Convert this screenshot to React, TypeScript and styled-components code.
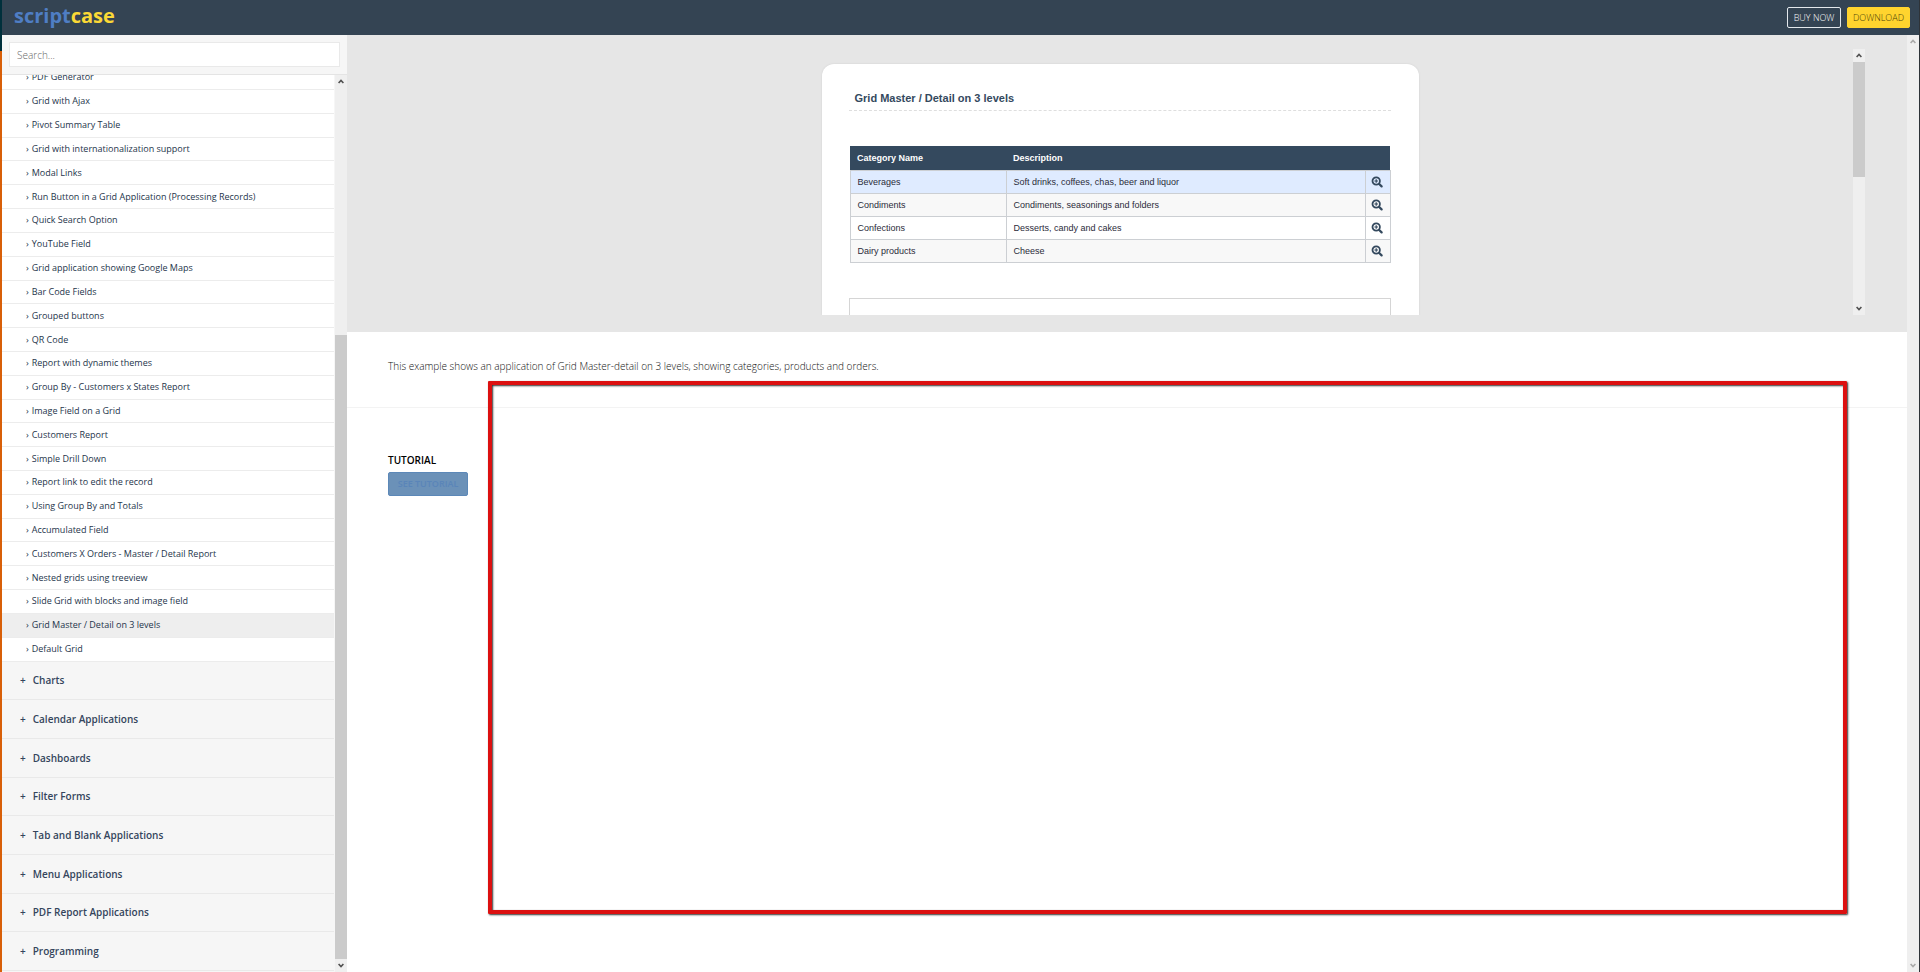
import React from "react";
import styled, { createGlobalStyle } from "styled-components";

const GlobalStyle = createGlobalStyle`
  *, *::before, *::after { box-sizing: border-box; }
  body {
    margin: 0;
    background: #fff;
    color: #42536a;
    font-family: "Open Sans", "Noto Sans", sans-serif;
    font-size: 10px;
  }
  h1, h2, p { margin: 0; padding: 0; }
  a { color: inherit; text-decoration: none; }
  button, input { font-family: inherit; }
`;

const Desktop = styled.div`
  display: flex;
  height: 100vh;
  overflow: hidden;
`;

const LeftEdge = styled.div`
  flex: none;
  width: 2px;
  background: linear-gradient(#00303c 51px, #d85f08 51px);
`;

const RightEdge = styled.div`
  flex: none;
  width: 1px;
  background: #2e3338;
`;

const Page = styled.div`
  flex: 1;
  min-width: 0;
  display: flex;
  flex-direction: column;
`;

const Header = styled.header`
  flex: none;
  height: 35px;
  padding: 0 9px 0 12px;
  display: flex;
  align-items: center;
  justify-content: space-between;
  background: #344453;
`;

const Logo = styled.a`
  padding-bottom: 4px;
  color: #4f7ec4;
  font-size: 20px;
  line-height: 24px;
  font-weight: 700;

  span { color: #fbd936; }
`;

const HeaderActions = styled.div`
  display: flex;
  gap: 6px;
`;

const HeaderButton = styled.button<{ $primary?: boolean }>`
  height: 21px;
  width: ${(p) => (p.$primary ? 63 : 54)}px;
  padding: 0;
  border: 1px solid ${(p) => (p.$primary ? "#ffd42e" : "#e3e8ec")};
  border-radius: 2px;
  background: ${(p) => (p.$primary ? "#ffd42e" : "transparent")};
  color: ${(p) => (p.$primary ? "#4a3f08" : "#fff")};
  font-size: 9px;
  line-height: 12px;
  font-weight: 300;
`;

const Body = styled.div`
  flex: 1;
  min-height: 0;
  display: flex;
`;

const Sidebar = styled.aside`
  flex: none;
  width: 345px;
  display: flex;
  flex-direction: column;
  background: #f6f6f6;
`;

const SearchBar = styled.div`
  flex: none;
  height: 40px;
  padding: 7px 7px 0;
  border-bottom: 1px solid #e4e4e4;
`;

const SearchInput = styled.input`
  display: block;
  width: 100%;
  height: 25px;
  padding: 0 7px;
  border: 1px solid #e9e9e9;
  background: #fff;
  font-size: 10px;
  font-weight: 300;
  color: #555;

  &::placeholder { color: #666; opacity: 1; }
`;

const MenuArea = styled.div`
  flex: 1;
  min-height: 0;
  display: flex;
`;

const Menu = styled.nav`
  flex: 1;
  min-height: 0;
  display: flex;
  flex-direction: column;
  padding: 0 1px 1px 0;
`;

const MenuLink = styled.a<{ $active?: boolean; $cut?: boolean }>`
  flex: ${(p) => (p.$cut ? "0 0 15px" : "0 1 24px")};
  min-height: 0;
  overflow: hidden;
  padding: 0 24px ${(p) => (p.$cut ? 6 : 0)}px;
  display: flex;
  align-items: ${(p) => (p.$cut ? "flex-end" : "center")};
  gap: 3px;
  border-bottom: 1px solid #ececec;
  background: ${(p) => (p.$active ? "#eeeeee" : "#fff")};
  color: #25354b;
  font-size: 9px;
  line-height: 12px;
  font-weight: 500;
  white-space: nowrap;
`;

const Category = styled.button`
  flex: 0 1 39px;
  min-height: 0;
  padding: 0 18px;
  display: flex;
  align-items: center;
  gap: 7px;
  border: 0;
  border-bottom: 1px solid #e9e9e9;
  background: #f6f6f6;
  color: #34455c;
  font-size: 10px;
  line-height: 14px;
  font-weight: 600;
  text-align: left;
`;

const Track = styled.div`
  flex: none;
  width: 12px;
  display: flex;
  flex-direction: column;
  background: #efefef;
`;

const TrackArrow = styled.button<{ $dim?: boolean }>`
  flex: none;
  height: 13px;
  padding: 0;
  border: 0;
  display: flex;
  align-items: center;
  justify-content: center;
  background: transparent;
  color: ${(p) => (p.$dim ? "#a9a9a9" : "#505050")};
`;

const Rail = styled.div<{ $before: number; $thumb: number }>`
  flex: 1;
  display: flex;
  flex-direction: column;

  &::before { content: ""; flex: ${(p) => p.$before}; }
  &::after { content: ""; flex: ${(p) => 1000 - p.$before - p.$thumb}; }
`;

const Thumb = styled.div<{ $size: number }>`
  flex: ${(p) => p.$size};
  background: #cbcbcb;
`;

function Scrollbar({ before = 0, thumb = 0, dim = false }) {
  return (
    <Track>
      <TrackArrow $dim={dim} aria-label="Scroll up">
        <svg width="6" height="5" viewBox="0 0 6 5" fill="none" stroke="currentColor" strokeWidth="1.6">
          <path d="M0.6 4 L3 1.4 L5.4 4" />
        </svg>
      </TrackArrow>
      <Rail $before={before} $thumb={thumb}>
        <Thumb $size={thumb} />
      </Rail>
      <TrackArrow $dim={dim} aria-label="Scroll down">
        <svg width="6" height="5" viewBox="0 0 6 5" fill="none" stroke="currentColor" strokeWidth="1.6">
          <path d="M0.6 1 L3 3.6 L5.4 1" />
        </svg>
      </TrackArrow>
    </Track>
  );
}

const Main = styled.main`
  position: relative;
  flex: 1;
  min-width: 0;
`;

const Preview = styled.section`
  height: 297px;
  padding: 14px 42px 17px 40px;
  display: flex;
  background: #e6e6e6;
`;

const PreviewFrame = styled.div`
  flex: 1;
  min-width: 0;
  padding-top: 15px;
  display: flex;
  justify-content: center;
  overflow: hidden;
`;

const Card = styled.div`
  width: 597px;
  padding: 26px 28px 0 27px;
  border-radius: 12px 12px 0 0;
  background: #fff;
  box-shadow: 0 0 2px #cfcfcf;
`;

const CardTitle = styled.h1`
  height: 21px;
  padding: 0 6px;
  border-bottom: 1px dashed #dedede;
  color: #34495e;
  font-family: "Liberation Sans", Arial, sans-serif;
  font-size: 11px;
  line-height: 17px;
  font-weight: 700;
`;

const Grid = styled.table`
  width: 541px;
  margin: 35px 0 35px 1px;
  border-collapse: collapse;
  table-layout: fixed;
  color: #2b2b3a;
  font-family: "Liberation Sans", Arial, sans-serif;
  font-size: 9px;
  line-height: 12px;
`;

const HeadCell = styled.th<{ $width?: number }>`
  width: ${(p) => (p.$width ? p.$width + "px" : "auto")};
  height: 24px;
  padding: 0 7px;
  background: #34495e;
  color: #fff;
  text-align: left;
  font-weight: 700;
`;

const Row = styled.tr<{ $tone: string }>`
  background: ${(p) => p.$tone};
`;

const Cell = styled.td`
  height: 23px;
  padding: 0 7px;
  border: 1px solid #cccfd3;
`;

const IconCell = styled(Cell)`
  padding: 0 5px;
`;

const ZoomButton = styled.button`
  display: block;
  padding: 0;
  border: 0;
  background: none;
  color: #34495e;
  line-height: 0;
`;

function ZoomInIcon() {
  return (
    <svg width="12" height="12" viewBox="0 0 12 12" fill="none" stroke="currentColor">
      <circle cx="5.2" cy="5" r="3.7" strokeWidth="1.8" />
      <path d="M8.2 8 L10.6 10.4" strokeWidth="2.2" strokeLinecap="round" />
      <path d="M5.2 3.2 V6.8 M3.4 5 H7" strokeWidth="1.2" />
    </svg>
  );
}

const NextPanel = styled.div`
  height: 40px;
  border: 1px solid #d5d5d5;
`;

const Summary = styled.section`
  height: 76px;
  padding: 26px 41px;
  border-bottom: 1px solid #f3f3f3;
`;

const SummaryText = styled.p`
  color: #111;
  font-size: 10px;
  line-height: 16px;
  font-weight: 300;
`;

const Tutorial = styled.section`
  padding: 44px 41px;
`;

const TutorialTitle = styled.h2`
  margin-bottom: 4px;
  color: #000;
  font-size: 10px;
  line-height: 16px;
  font-weight: 600;
`;

const TutorialButton = styled.button`
  width: 80px;
  height: 24px;
  padding: 0;
  border: 1px solid #5c88b8;
  border-radius: 2px;
  background: #6b91b8;
  color: #5a85b9;
  font-size: 9px;
  line-height: 14px;
  font-weight: 600;
`;

const Highlight = styled.div`
  position: absolute;
  inset: 346px 60px 58px 141px;
  border: 4px solid #dc1010;
  border-radius: 1px;
  box-shadow: 1px 1px 2px #333, inset 1px 1px 2px #333;
`;

const pages = [
  "PDF Generator",
  "Grid with Ajax",
  "Pivot Summary Table",
  "Grid with internationalization support",
  "Modal Links",
  "Run Button in a Grid Application (Processing Records)",
  "Quick Search Option",
  "YouTube Field",
  "Grid application showing Google Maps",
  "Bar Code Fields",
  "Grouped buttons",
  "QR Code",
  "Report with dynamic themes",
  "Group By - Customers x States Report",
  "Image Field on a Grid",
  "Customers Report",
  "Simple Drill Down",
  "Report link to edit the record",
  "Using Group By and Totals",
  "Accumulated Field",
  "Customers X Orders - Master / Detail Report",
  "Nested grids using treeview",
  "Slide Grid with blocks and image field",
  "Grid Master / Detail on 3 levels",
  "Default Grid",
];

const categories = [
  "Charts",
  "Calendar Applications",
  "Dashboards",
  "Filter Forms",
  "Tab and Blank Applications",
  "Menu Applications",
  "PDF Report Applications",
  "Programming",
];

const rows = [
  { name: "Beverages", text: "Soft drinks, coffees, chas, beer and liquor", tone: "#dfebff" },
  { name: "Condiments", text: "Condiments, seasonings and folders", tone: "#f8f8f8" },
  { name: "Confections", text: "Desserts, candy and cakes", tone: "#ffffff" },
  { name: "Dairy products", text: "Cheese", tone: "#f8f8f8" },
];

export default function App() {
  return (
    <Desktop>
      <GlobalStyle />
      <LeftEdge />
      <Page>
        <Header>
          <Logo href="#">script<span>case</span></Logo>
          <HeaderActions>
            <HeaderButton>BUY NOW</HeaderButton>
            <HeaderButton $primary>DOWNLOAD</HeaderButton>
          </HeaderActions>
        </Header>
        <Body>
          <Sidebar>
            <SearchBar>
              <SearchInput type="text" placeholder="Search..." aria-label="Search" />
            </SearchBar>
            <MenuArea>
              <Menu>
                {pages.map((page, i) => (
                  <MenuLink key={page} href="#" $cut={i === 0} $active={page.startsWith("Grid Master")}>
                    <span>›</span>
                    <span>{page}</span>
                  </MenuLink>
                ))}
                {categories.map((name) => (
                  <Category key={name}>
                    <span>+</span>
                    <span>{name}</span>
                  </Category>
                ))}
              </Menu>
              <Scrollbar before={284} thumb={716} />
            </MenuArea>
          </Sidebar>
          <Main>
            <Preview>
              <PreviewFrame>
                <Card>
                  <CardTitle>Grid Master / Detail on 3 levels</CardTitle>
                  <Grid>
                    <thead>
                      <tr>
                        <HeadCell $width={156}>Category Name</HeadCell>
                        <HeadCell>Description</HeadCell>
                        <HeadCell $width={25} />
                      </tr>
                    </thead>
                    <tbody>
                      {rows.map((row) => (
                        <Row key={row.name} $tone={row.tone}>
                          <Cell>{row.name}</Cell>
                          <Cell>{row.text}</Cell>
                          <IconCell>
                            <ZoomButton aria-label={"Details of " + row.name}>
                              <ZoomInIcon />
                            </ZoomButton>
                          </IconCell>
                        </Row>
                      ))}
                    </tbody>
                  </Grid>
                  <NextPanel />
                </Card>
              </PreviewFrame>
              <Scrollbar before={0} thumb={480} />
            </Preview>
            <Summary>
              <SummaryText>
                This example shows an application of Grid Master-detail on 3 levels, showing categories, products and orders.
              </SummaryText>
            </Summary>
            <Tutorial>
              <TutorialTitle>TUTORIAL</TutorialTitle>
              <TutorialButton>SEE TUTORIAL</TutorialButton>
            </Tutorial>
            <Highlight />
          </Main>
          <Scrollbar dim />
        </Body>
      </Page>
      <RightEdge />
    </Desktop>
  );
}
